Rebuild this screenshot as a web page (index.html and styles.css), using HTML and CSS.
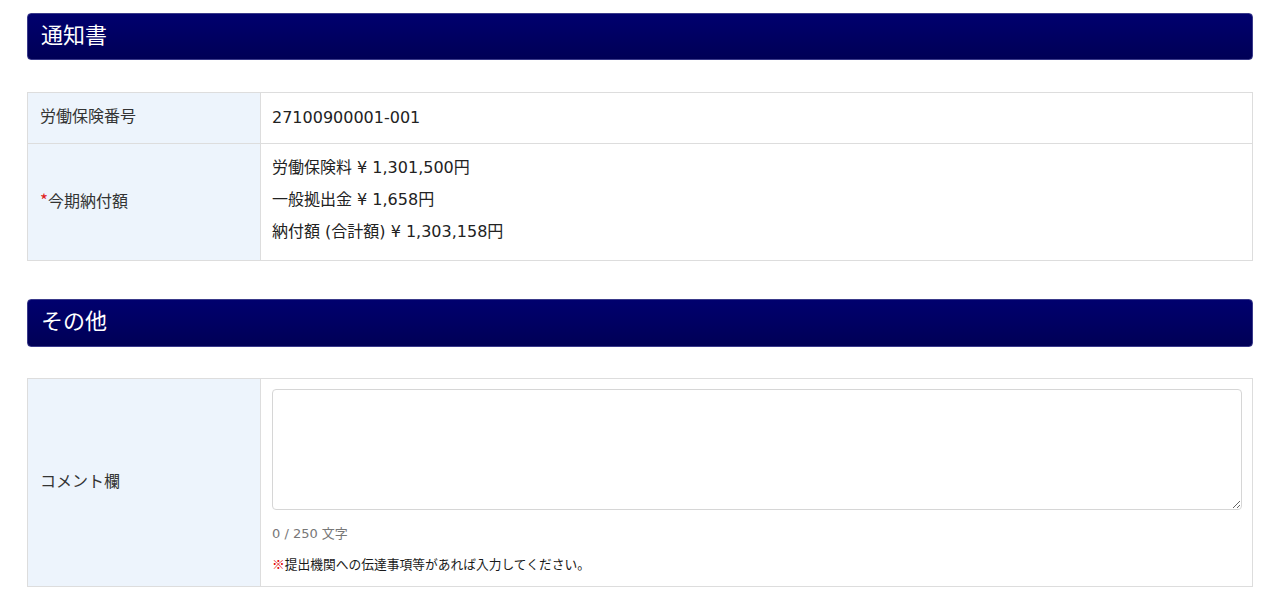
FILE: index.html
```html
<!DOCTYPE html>
<html lang="ja">
<head>
<meta charset="utf-8">
<title>通知書</title>
<link rel="stylesheet" href="styles.css">
</head>
<body>
<div class="page">
  <h2 class="section-title">通知書</h2>
  <table class="form-table">
    <colgroup><col class="label-col"><col></colgroup>
    <tr class="row-single">
      <th>労働保険番号</th>
      <td>27100900001-001</td>
    </tr>
    <tr>
      <th><span class="req">*</span>今期納付額</th>
      <td class="multi">
        <div class="line">労働保険料 ¥ 1,301,500円</div>
        <div class="line">一般拠出金 ¥ 1,658円</div>
        <div class="line">納付額 (合計額) ¥ 1,303,158円</div>
      </td>
    </tr>
  </table>

  <h2 class="section-title second">その他</h2>
  <table class="form-table">
    <colgroup><col class="label-col"><col></colgroup>
    <tr>
      <th>コメント欄</th>
      <td class="comment-cell">
        <textarea class="comment" maxlength="250"></textarea>
        <div class="counter">0 / 250 文字</div>
        <div class="note"><span class="mark">※</span>提出機関への伝達事項等があれば入力してください。</div>
      </td>
    </tr>
  </table>
</div>
</body>
</html>
```

FILE: styles.css
```css
html, body {
  margin: 0;
  padding: 0;
  background: #ffffff;
}
body {
  font-family: "DejaVu Sans", "Noto Sans CJK JP", sans-serif;
  color: #222222;
  font-size: 16px;
}
.page {
  padding: 13px 27px 0 27px;
}
.section-title {
  margin: 0 0 32px 0;
  height: 45px;
  line-height: 39px;
  padding: 0 13px;
  font-size: 22px;
  font-weight: normal;
  color: #ffffff;
  background: linear-gradient(#00006e, #000056);
  border: 1px solid #3a3a8a;
  border-radius: 4px;
  font-family: "Noto Sans CJK JP", sans-serif;
}
.section-title.second {
  height: 46px;
  margin-top: 38px;
  margin-bottom: 31px;
}
.form-table {
  width: 100%;
  border-collapse: collapse;
  table-layout: fixed;
}
.label-col {
  width: 233px;
}
.form-table th,
.form-table td {
  border: 1px solid #dddddd;
  vertical-align: middle;
  text-align: left;
}
.form-table th {
  background: #edf4fc;
  font-weight: normal;
  font-size: 16px;
  color: #333333;
  padding: 0 12px 6px 12px;
  font-family: "Noto Sans CJK JP", sans-serif;
}
.form-table td {
  padding: 0 11px 2px 11px;
  font-size: 16px;
}
.row-single th {
  height: 44px;
}
.row-single td {
  height: 48px;
}
.req {
  color: #e02020;
  font-size: 17px;
}
.multi {
  padding-top: 8px !important;
  padding-bottom: 12px !important;
}
.line {
  line-height: 32px;
}
.comment-cell {
  padding: 10px 10px 12px 11px !important;
}
.comment {
  display: block;
  box-sizing: border-box;
  width: 100%;
  height: 121px;
  border: 1px solid #d6d6d6;
  border-radius: 4px;
  margin: 0;
  resize: vertical;
}
.counter {
  margin-top: 14px;
  line-height: 20px;
  font-size: 13px;
  color: #777777;
}
.note {
  margin-top: 10px;
  line-height: 20px;
  font-size: 12.75px;
  color: #1a1a1a;
  font-family: "Noto Sans CJK JP", sans-serif;
}
.mark {
  color: #e00000;
}
```
